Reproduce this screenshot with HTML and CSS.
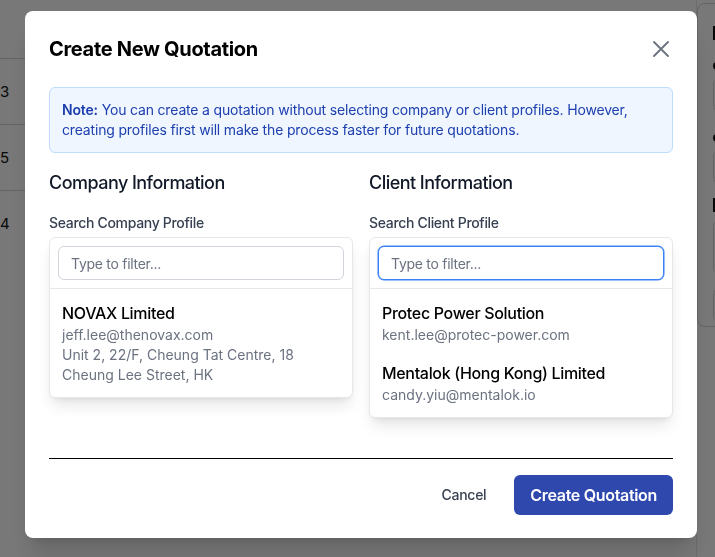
FILE: index.html
```html
<!DOCTYPE html>
<html lang="en">
<head>
  <meta charset="UTF-8">
  <meta name="viewport" content="width=device-width, initial-scale=1.0">
  <title>Quotations</title>
  <link rel="stylesheet" href="styles.css">
</head>
<body>

<!-- Page behind the dialog -->
<div class="page">
  <div class="list">
    <div class="list-head"></div>
    <div class="list-row">3</div>
    <div class="list-row">5</div>
    <div class="list-row">4</div>
  </div>
  <aside class="side-card">
    <div class="side-title"></div>
    <div class="side-label"></div>
    <div class="side-input"></div>
    <div class="side-label"></div>
    <div class="side-input"></div>
    <div class="side-title"></div>
    <div class="side-input tall"></div>
    <div class="side-input"></div>
  </aside>
</div>

<!-- Create quotation dialog -->
<div class="overlay">
  <div class="modal">
    <div class="modal-head">
      <h2>Create New Quotation</h2>
      <button class="close-button" aria-label="Close">
        <svg width="28" height="28" viewBox="0 0 24 24" fill="none" stroke="currentColor" stroke-width="1.6" stroke-linecap="round">
          <path d="M6 6l12 12M18 6L6 18"/>
        </svg>
      </button>
    </div>

    <div class="modal-body">
      <p class="note"><strong>Note:</strong> You can create a quotation without selecting company or client profiles. However, creating profiles first will make the process faster for future quotations.</p>

      <div class="columns">
        <section>
          <h3>Company Information</h3>
          <label class="field-label">Search Company Profile</label>
          <div class="picker">
            <div class="picker-search">
              <input type="text" placeholder="Type to filter...">
            </div>
            <ul class="picker-list">
              <li>
                <div class="item-name">NOVAX Limited</div>
                <div class="item-meta">jeff.lee@thenovax.com</div>
                <div class="item-meta">Unit 2, 22/F, Cheung Tat Centre, 18 Cheung Lee Street, HK</div>
              </li>
            </ul>
          </div>
        </section>

        <section>
          <h3>Client Information</h3>
          <label class="field-label">Search Client Profile</label>
          <div class="picker">
            <div class="picker-search">
              <input type="text" class="focused" placeholder="Type to filter...">
            </div>
            <ul class="picker-list">
              <li>
                <div class="item-name">Protec Power Solution</div>
                <div class="item-meta">kent.lee@protec-power.com</div>
              </li>
              <li>
                <div class="item-name">Mentalok (Hong Kong) Limited</div>
                <div class="item-meta">candy.yiu@mentalok.io</div>
              </li>
            </ul>
          </div>
        </section>
      </div>
    </div>

    <div class="modal-foot">
      <button class="cancel-button">Cancel</button>
      <button class="primary-button">Create Quotation</button>
    </div>
  </div>
</div>

</body>
</html>
```

FILE: styles.css
```css
body {
  font-family: 'Inter', 'Liberation Sans', sans-serif;
  letter-spacing: -0.02em;
  background-color: #fff;
  margin: 0;
  padding: 0;
  color: #111827;
}

/* background page */
.page {
  display: grid;
  grid-template-columns: 697px 1fr;
  height: 557px;
  overflow: hidden;
}

.list {
  border-right: 1px solid #e5e7eb;
}

.list-head {
  height: 58px;
  border-bottom: 1px solid #d1d5db;
}

.list-row {
  height: 65px;
  border-bottom: 1px solid #d1d5db;
  display: flex;
  align-items: center;
  font-size: 15px;
  color: #111;
}

.list-row:last-child {
  border-bottom: none;
}

.side-card {
  margin-top: 3px;
  height: 300px;
  border: 1px solid #d1d5db;
  border-radius: 8px;
  padding: 22px 0 0 15px;
  background: #fff;
}

.side-title {
  width: 12px;
  height: 14px;
  background: #111;
}

.side-label {
  width: 10px;
  height: 8px;
  margin-top: 22px;
  border-radius: 4px;
  background: #111;
}

.side-input {
  height: 32px;
  margin: 8px 0 14px;
  border: 1px solid #d1d5db;
  border-radius: 6px;
}

.side-input.tall {
  height: 52px;
}

/* dialog */
.overlay {
  position: fixed;
  inset: 0;
  background: rgba(0, 0, 0, 0.53);
}

.modal {
  margin: 11px 0 0 25px;
  width: 672px;
  height: 527px;
  box-sizing: border-box;
  background: #fff;
  border-radius: 8px;
  box-shadow: 0 20px 25px -5px rgba(0, 0, 0, 0.15), 0 8px 10px -6px rgba(0, 0, 0, 0.1);
}

.modal-head {
  display: flex;
  justify-content: space-between;
  align-items: center;
  padding: 24px 24px 0;
}

.modal-head h2 {
  margin: 0;
  font-size: 20px;
  line-height: 28px;
  font-weight: 700;
  color: #000;
}

.close-button {
  border: none;
  background: none;
  padding: 0;
  margin-right: -2px;
  color: #6b7280;
  display: flex;
}

.modal-body {
  padding: 24px 24px 0;
}

.note {
  margin: 0;
  background: #eff6ff;
  border: 1px solid #bfdbfe;
  border-radius: 6px;
  padding: 12px;
  font-size: 14px;
  line-height: 20px;
  letter-spacing: -0.012em;
  color: #1e40af;
}

.note strong {
  font-weight: 600;
}

.columns {
  display: grid;
  grid-template-columns: 1fr 1fr;
  gap: 16px;
  align-items: start;
  margin-top: 16px;
}

.columns h3 {
  margin: 0;
  font-size: 18px;
  line-height: 28px;
  font-weight: 500;
  letter-spacing: -0.03em;
  color: #111827;
}

.field-label {
  display: block;
  margin-top: 16px;
  font-size: 14px;
  line-height: 20px;
  font-weight: 500;
  color: #374151;
}

.picker {
  margin-top: 4px;
  border: 1px solid #e5e7eb;
  border-radius: 6px;
  background: #fff;
  box-shadow: 0 10px 15px -3px rgba(0, 0, 0, 0.1), 0 4px 6px -4px rgba(0, 0, 0, 0.1);
}

.picker-search {
  padding: 8px;
  border-bottom: 1px solid #e5e7eb;
}

.picker-search input {
  display: block;
  width: 100%;
  box-sizing: border-box;
  height: 34px;
  padding: 6px 12px;
  border: 1px solid #d1d5db;
  border-radius: 6px;
  font-family: inherit;
  font-size: 14px;
  line-height: 20px;
  letter-spacing: -0.02em;
  color: #111827;
  outline: none;
}

.picker-search input::placeholder {
  color: #6b7280;
}

.picker-search input.focused {
  border-color: #3b82f6;
  box-shadow: 0 0 0 0.5px #3b82f6;
}

.picker-list {
  list-style: none;
  margin: 0;
  padding: 4px 0;
}

.picker-list li {
  padding: 8px 12px;
}

.item-name {
  font-size: 16px;
  line-height: 24px;
  font-weight: 500;
  color: #000;
}

.item-meta {
  font-size: 14px;
  line-height: 20px;
  letter-spacing: 0;
  color: #6b7280;
}

.modal-foot {
  display: flex;
  justify-content: flex-end;
  align-items: center;
  gap: 12px;
  margin: 40px 24px 0;
  padding: 16px 0 23px;
  border-top: 1px solid #000;
}

.cancel-button {
  border: none;
  background: none;
  padding: 8px 16px;
  font-family: inherit;
  font-size: 14px;
  line-height: 20px;
  font-weight: 500;
  letter-spacing: -0.02em;
  color: #374151;
}

.primary-button {
  border: none;
  border-radius: 6px;
  background: #2f48ad;
  color: #fff;
  padding: 8px 16px;
  font-family: inherit;
  font-size: 16px;
  line-height: 24px;
  font-weight: 600;
  letter-spacing: -0.02em;
}
```
